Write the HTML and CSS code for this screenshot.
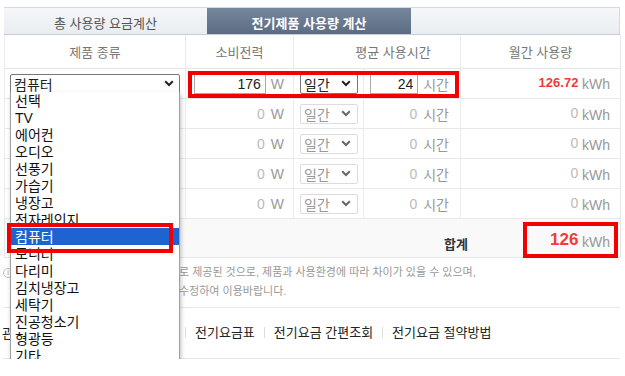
FILE: index.html
```html
<!DOCTYPE html>
<html lang="ko">
<head>
    <meta charset="utf-8">
    <title>전기제품 사용량 계산</title>
    <link rel="stylesheet" href="styles.css">
</head>
<body>
    <div class="wrap">
        <!-- Tabs -->
        <div class="tabs">
            <a href="#" class="tab">총 사용량 요금계산</a>
            <a href="#" class="tab on">전기제품 사용량 계산</a>
            <span class="tab-fill"></span>
        </div>

        <!-- Calculator -->
        <table class="calc">
            <colgroup>
                <col style="width:181px">
                <col style="width:108px">
                <col style="width:70px">
                <col style="width:97px">
                <col style="width:160px">
            </colgroup>
            <thead>
                <tr>
                    <th>제품 종류</th>
                    <th>소비전력</th>
                    <th colspan="2" class="th-hour">평균 사용시간</th>
                    <th>월간 사용량</th>
                </tr>
            </thead>
            <tbody>
                <tr class="active">
                    <td class="c-prod"><div class="sel sel-wide"><span>컴퓨터</span><svg width="10" height="7" viewBox="0 0 10 7"><path d="M1.2 1.2l3.8 3.8 3.8-3.8" fill="none" stroke="#222" stroke-width="2"/></svg></div></td>
                    <td class="c-watt"><input class="num w-watt" type="text" value="176"><span class="unit">W</span></td>
                    <td class="c-per"><div class="sel"><span>일간</span><svg width="10" height="7" viewBox="0 0 10 7"><path d="M1.2 1.2l3.8 3.8 3.8-3.8" fill="none" stroke="#222" stroke-width="2"/></svg></div></td>
                    <td class="c-hour"><input class="num w-hour" type="text" value="24"><span class="unit">시간</span></td>
                    <td class="c-month"><b class="red">126.72</b> <span class="unit">kWh</span></td>
                </tr>
                <tr class="off">
                    <td class="c-prod"></td>
                    <td class="c-watt"><input class="num w-watt" type="text" value="0" disabled><span class="unit">W</span></td>
                    <td class="c-per"><div class="sel"><span>일간</span><svg width="10" height="7" viewBox="0 0 10 7"><path d="M1.2 1.2l3.8 3.8 3.8-3.8" fill="none" stroke="#666" stroke-width="2"/></svg></div></td>
                    <td class="c-hour"><input class="num w-hour" type="text" value="0" disabled><span class="unit">시간</span></td>
                    <td class="c-month"><span class="zero">0</span> <span class="unit">kWh</span></td>
                </tr>
                <tr class="off">
                    <td class="c-prod"></td>
                    <td class="c-watt"><input class="num w-watt" type="text" value="0" disabled><span class="unit">W</span></td>
                    <td class="c-per"><div class="sel"><span>일간</span><svg width="10" height="7" viewBox="0 0 10 7"><path d="M1.2 1.2l3.8 3.8 3.8-3.8" fill="none" stroke="#666" stroke-width="2"/></svg></div></td>
                    <td class="c-hour"><input class="num w-hour" type="text" value="0" disabled><span class="unit">시간</span></td>
                    <td class="c-month"><span class="zero">0</span> <span class="unit">kWh</span></td>
                </tr>
                <tr class="off">
                    <td class="c-prod"></td>
                    <td class="c-watt"><input class="num w-watt" type="text" value="0" disabled><span class="unit">W</span></td>
                    <td class="c-per"><div class="sel"><span>일간</span><svg width="10" height="7" viewBox="0 0 10 7"><path d="M1.2 1.2l3.8 3.8 3.8-3.8" fill="none" stroke="#666" stroke-width="2"/></svg></div></td>
                    <td class="c-hour"><input class="num w-hour" type="text" value="0" disabled><span class="unit">시간</span></td>
                    <td class="c-month"><span class="zero">0</span> <span class="unit">kWh</span></td>
                </tr>
                <tr class="off">
                    <td class="c-prod"></td>
                    <td class="c-watt"><input class="num w-watt" type="text" value="0" disabled><span class="unit">W</span></td>
                    <td class="c-per"><div class="sel"><span>일간</span><svg width="10" height="7" viewBox="0 0 10 7"><path d="M1.2 1.2l3.8 3.8 3.8-3.8" fill="none" stroke="#666" stroke-width="2"/></svg></div></td>
                    <td class="c-hour"><input class="num w-hour" type="text" value="0" disabled><span class="unit">시간</span></td>
                    <td class="c-month"><span class="zero">0</span> <span class="unit">kWh</span></td>
                </tr>
            </tbody>
            <tfoot>
                <tr>
                    <td colspan="5">
                        <div class="sum">
                            <span class="sum-label">합계</span>
                            <span class="sum-val"><b class="red">126</b> <span class="unit">kWh</span></span>
                        </div>
                    </td>
                </tr>
            </tfoot>
        </table>

        <!-- Note (start of each line sits under the open list) -->
        <div class="note">
            <span class="note-icon">i</span>
            <p class="note-text">로 제공된 것으로, 제품과 사용환경에 따라 차이가 있을 수 있으며,<br>수정하여 이용바랍니다.</p>
        </div>

        <!-- Related links -->
        <div class="links">
            <span class="links-title">관</span>
            <a href="#">전기요금표</a>
            <a href="#">전기요금 간편조회</a>
            <a href="#">전기요금 절약방법</a>
        </div>

        <!-- Open product list -->
        <ul class="dropdown">
            <li>선택</li>
            <li>TV</li>
            <li>에어컨</li>
            <li>오디오</li>
            <li>선풍기</li>
            <li>가습기</li>
            <li>냉장고</li>
            <li>전자레인지</li>
            <li class="picked">컴퓨터</li>
            <li>모니터</li>
            <li>다리미</li>
            <li>김치냉장고</li>
            <li>세탁기</li>
            <li>진공청소기</li>
            <li>형광등</li>
            <li>기타</li>
        </ul>

        <!-- Highlight marks -->
        <div class="mark mark-input"></div>
        <div class="mark mark-item"></div>
        <div class="mark mark-total"></div>
    </div>
</body>
</html>
```

FILE: styles.css
```css
body {
    margin: 0;
    background: #fff;
    font-family: 'Liberation Sans', 'Noto Sans CJK KR', sans-serif;
    font-size: 13px;
    color: #333;
}

.wrap {
    position: relative;
    width: 616px;
    margin: 7px 0 0 4px;
}

/* Tabs */
.tabs {
    display: flex;
    height: 26px;
    border-top: 1px solid #d4d9df;
    border-bottom: 1px solid #c5cdd6;
    background: linear-gradient(#f5f7f9, #e9edf1);
}

.tab {
    width: 203px;
    display: flex;
    align-items: center;
    justify-content: center;
    padding-top: 2px;
    color: #555;
    text-decoration: none;
    font-size: 13px;
}

.tab.on {
    width: 204px;
    background: linear-gradient(#76879d, #5c6c82);
    color: #fff;
    font-weight: bold;
}

.tab-fill {
    flex: 1;
    border-right: 1px solid #d4d9df;
}

/* Table */
.calc {
    width: 616px;
    border-collapse: collapse;
    table-layout: fixed;
    border-left: 1px solid #e6e6e6;
    border-right: 1px solid #e6e6e6;
}

.calc th {
    height: 33px;
    padding: 0;
    font-weight: normal;
    color: #777;
    border-left: 1px solid #ececec;
    border-bottom: 1px solid #e6e6e6;
}

.calc th.th-hour { padding-left: 32px; }

.calc td {
    height: 29px;
    padding: 0;
    border-left: 1px solid #ececec;
    border-bottom: 1px solid #e8e8e8;
    white-space: nowrap;
}

.c-prod { padding-left: 5px !important; }
.c-watt { text-align: right; padding-right: 9px !important; }
.c-per { padding-left: 6px !important; }
.c-hour { text-align: right; padding-right: 11px !important; }
.c-month { text-align: right; padding-right: 10px !important; }

.sel {
    display: flex;
    align-items: center;
    justify-content: space-between;
    box-sizing: border-box;
    width: 58px;
    height: 20px;
    padding: 0 6px 0 3px;
    border: 1px solid #777;
    border-radius: 2px;
    background: #fff;
    color: #222;
    font-size: 14px;
}

.sel-wide {
    width: 170px;
    padding-right: 5px;
}

.off .sel {
    border-color: #dcdcdc;
    color: #999;
}

.num {
    box-sizing: border-box;
    height: 20px;
    padding: 0 4px;
    border: 1px solid #a9a9a9;
    text-align: right;
    font-family: inherit;
    font-size: 14px;
    color: #222;
    vertical-align: middle;
}

.w-watt { width: 72px; }
.w-hour { width: 48px; }

.off .num {
    border-color: transparent;
    background: transparent;
    color: #bbb;
    padding-right: 0;
}

.unit {
    margin-left: 5px;
    color: #999;
    font-size: 14px;
    vertical-align: middle;
}

.c-month .unit,
.sum-val .unit { margin-left: 0; }

.red {
    color: #f23a3a;
    font-size: 13px;
}

.zero { color: #bbb; font-size: 14px; }

/* Total row */
.calc tfoot td {
    height: 38px;
    background: #f9f9f9;
    border-left: none;
}

.sum {
    display: flex;
    align-items: center;
    justify-content: flex-end;
    padding: 4px 10px 0 0;
}

.sum-label {
    font-weight: bold;
    color: #333;
    font-size: 13px;
    margin-right: 82px;
    padding-top: 6px;
}

.sum-val .red { font-size: 17px; }

/* Note */
.note {
    display: flex;
    align-items: flex-start;
    margin-left: -1px;
    padding: 5px 0 6px;
    border-bottom: 1px solid #e8e8e8;
}

.note-icon {
    box-sizing: border-box;
    width: 10px;
    height: 10px;
    margin-top: 5px;
    border: 1px solid #bbb;
    border-radius: 50%;
    font-size: 7px;
    line-height: 8px;
    text-align: center;
    color: #999;
}

.note-text {
    margin: 0 0 0 166px;
    font-size: 11px;
    line-height: 19px;
    color: #999;
}

/* Links */
.links {
    display: flex;
    align-items: center;
    height: 48px;
    margin-left: -2px;
    padding-bottom: 2px;
    border-bottom: 1px solid #e8e8e8;
    font-size: 13px;
}

.links-title {
    width: 183px;
    color: #222;
}

.links a {
    padding: 0 9px;
    border-left: 1px solid #ddd;
    line-height: 11px;
    color: #222;
    text-decoration: none;
}

/* Dropdown list */
.dropdown {
    position: absolute;
    left: 6px;
    top: 85px;
    width: 170px;
    box-sizing: border-box;
    margin: 0;
    padding: 0 0 1px;
    list-style: none;
    background: #fff;
    border: 1px solid #a0a0a0;
    border-top: none;
    border-radius: 0 0 4px 4px;
    box-shadow: 1px 2px 4px rgba(0, 0, 0, 0.25);
    font-size: 14px;
    color: #111;
}

.dropdown li {
    height: 17px;
    line-height: 18px;
    padding: 0 4px;
}

.dropdown li.picked {
    background: #1e64d0;
    color: #fff;
}

/* Red highlight marks */
.mark {
    position: absolute;
    border: 4px solid #f20000;
    box-sizing: border-box;
}

.mark-input { left: 184px; top: 64px; width: 271px; height: 27px; }
.mark-item { left: 3px; top: 216px; width: 166px; height: 30px; }
.mark-total { left: 519px; top: 215px; width: 95px; height: 36px; }
```
